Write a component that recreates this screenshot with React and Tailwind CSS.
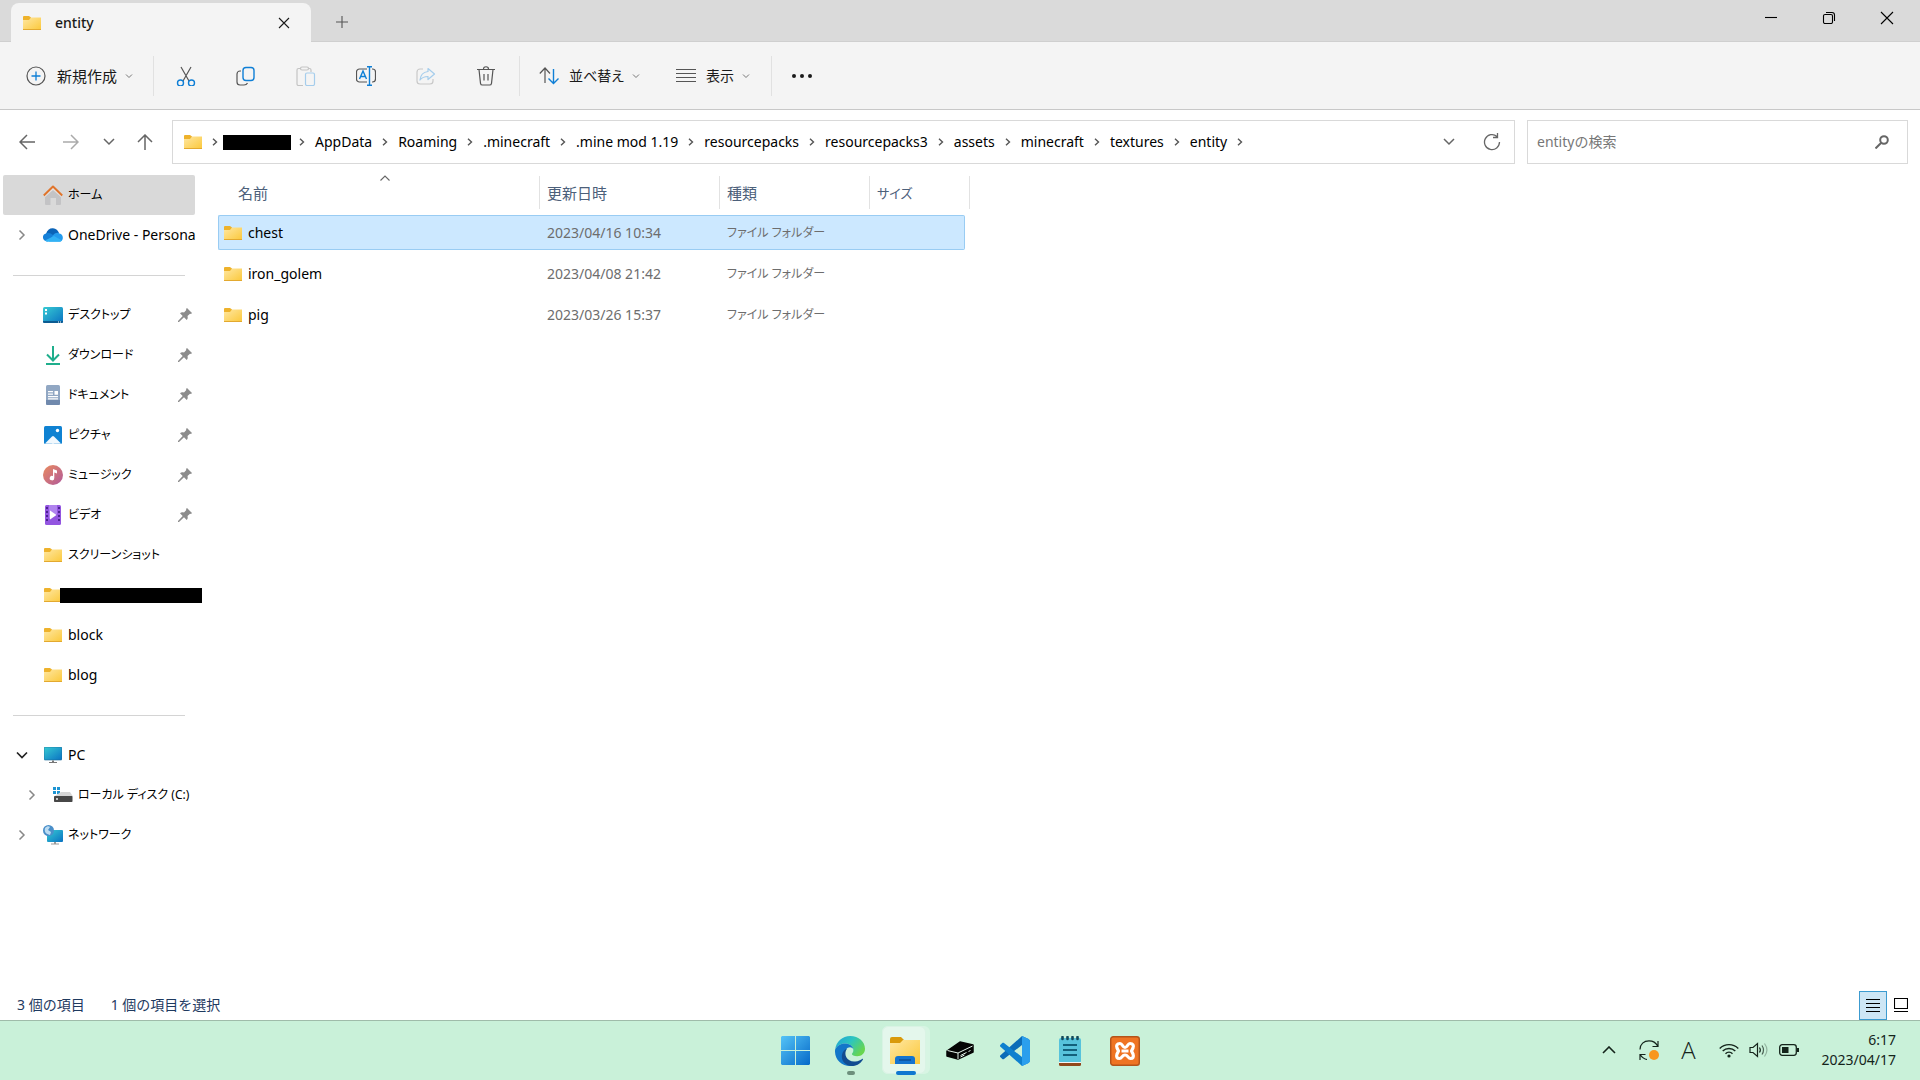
import { Fragment, useState } from 'react';

const crumbs = [
  'AppData',
  'Roaming',
  '.minecraft',
  '.mine mod 1.19',
  'resourcepacks',
  'resourcepacks3',
  'assets',
  'minecraft',
  'textures',
  'entity',
];

const files = [
  { name: 'chest', date: '2023/04/16 10:34', type: 'ファイル フォルダー' },
  { name: 'iron_golem', date: '2023/04/08 21:42', type: 'ファイル フォルダー' },
  { name: 'pig', date: '2023/03/26 15:37', type: 'ファイル フォルダー' },
];

export default function App() {
  const [selected, setSelected] = useState('chest');

  return (
    <div className="flex min-h-screen flex-col bg-white font-['Noto_Sans','Noto_Sans_CJK_JP',sans-serif] text-sm leading-5 text-[#1a1a1a]">
      <TitleBar />
      <Toolbar />
      <AddressRow />

      {/* CONTENT */}
      <div className="flex flex-1">
        <Sidebar />
        <main className="flex-1">
          <FileTable selected={selected} onSelect={setSelected} />
        </main>
      </div>

      <StatusBar />
      <Taskbar />
    </div>
  );
}

/* TITLE BAR */

function TitleBar() {
  return (
    <header className="flex h-[42px] border-b border-[#cfcfcf] bg-[#dadada]">
      <div className="mt-[3px] -mb-px ml-[11px] flex w-[300px] items-center rounded-t-lg bg-[#f4f4f4] pr-[13px] pl-3">
        <FolderIcon />
        <span className="ml-3.5 flex-1 font-medium">entity</span>
        <button aria-label="タブを閉じる" className="flex h-6 w-7 items-center justify-center">
          <Line className="size-3" box="0 0 12 12" d="M1 1l10 10M11 1L1 11" />
        </button>
      </div>
      <button aria-label="新しいタブ" className="mt-[3px] ml-[15px] flex w-8 items-center justify-center text-[#555]">
        <Line className="size-3.5" box="0 0 14 14" d="M7 1v12M1 7h12" />
      </button>
      <div className="mr-1 ml-auto flex h-9">
        <button aria-label="最小化" className="flex w-[58px] items-center justify-center text-black">
          <Line className="size-3" box="0 0 12 12" d="M0 5.5h12" />
        </button>
        <button aria-label="元に戻す" className="flex w-[58px] items-center justify-center text-black">
          <Line className="size-3.5" box="0 0 14 14" d="M3 3.5h6A1.5 1.5 0 0 1 10.500 5v6a1.500 1.500 0 0 1-1.500 1.500H3A1.500 1.500 0 0 1 1.500 11V5A1.500 1.500 0 0 1 3 3.500zM4 1.500h6a2.500 2.500 0 0 1 2.500 2.500v6" />
        </button>
        <button aria-label="閉じる" className="flex w-[58px] items-center justify-center text-black">
          <Line className="size-3.5" box="0 0 14 14" d="M1 1l12 12M13 1L1 13" />
        </button>
      </div>
    </header>
  );
}

/* TOOLBAR */

function Toolbar() {
  return (
    <div className="flex h-[68px] items-center border-b border-[#c8c8c8] bg-[#f4f4f4]">
      <button className="ml-[26px] flex items-center">
        <svg className="size-5" viewBox="0 0 20 20" fill="none">
          <circle cx="10" cy="10" r="9" stroke="#555" strokeWidth="1.2" />
          <path d="M10 5.500v9M5.500 10h9" stroke="#0f7fd6" strokeWidth="1.300" />
        </svg>
        <span className="ml-[11px] text-[15px]">新規作成</span>
        <Caret />
      </button>
      <Divider className="ml-5" />

      <div className="ml-0.5 flex">
        <ToolButton label="切り取り">
          <path d="M5 1l8 14M15 1L7 15" stroke="#555" />
          <circle cx="4.500" cy="17" r="3" stroke="#0f7fd6" strokeWidth="1.400" />
          <circle cx="15.500" cy="17" r="3" stroke="#0f7fd6" strokeWidth="1.400" />
        </ToolButton>
        <ToolButton label="コピー">
          <path d="M5 5H4a3 3 0 0 0-3 3v8a3 3 0 0 0 3 3h4c2 0 3-1 3.500-2" stroke="#555" />
          <rect x="7" y="1.500" width="11" height="13" rx="3" stroke="#0f7fd6" strokeWidth="1.400" />
        </ToolButton>
        <ToolButton label="貼り付け">
          <path d="M5 2.500H2.500A1.500 1.500 0 0 0 1 4v14a1.500 1.500 0 0 0 1.500 1.500H7M12 2.500h1.500A1.500 1.500 0 0 1 15 4v2" stroke="#c3c3c3" />
          <rect x="4.500" y="1" width="8" height="3" rx="1.500" stroke="#c3c3c3" />
          <rect x="9.500" y="7" width="9" height="12.500" rx="1.500" stroke="#a5cdec" />
        </ToolButton>
        <ToolButton label="名前の変更">
          <path d="M11 3H3.500A3 3 0 0 0 .5 6v7a3 3 0 0 0 3 3H11M16 3h.5a3 3 0 0 1 3 3v7a3 3 0 0 1-3 3H16" stroke="#555" />
          <path d="M3.500 13L7 5l3.500 8M4.800 10.500h4.500M13.500 1v18M11 .7h5M11 19.300h5" stroke="#0f7fd6" strokeWidth="1.400" />
        </ToolButton>
        <ToolButton label="共有">
          <path d="M7 3H4a3 3 0 0 0-3 3v9a3 3 0 0 0 3 3h10a3 3 0 0 0 3-3v-2" stroke="#c8c8c8" />
          <path d="M12 2.500l6.500 5.500L12 13.500v-3c-4 0-6 1-8 3.500.5-5 3.500-8 8-8.500z" stroke="#a5cdec" strokeLinejoin="round" />
        </ToolButton>
        <ToolButton label="削除">
          <path d="M1 3.500h18M7.500 3c0-3 5-3 5 0M3 3.500l1.500 13.800A2 2 0 0 0 6.500 19h7a2 2 0 0 0 2-1.700L17 3.500M8 8v6.500M12 8v6.500" stroke="#555" />
        </ToolButton>
      </div>
      <Divider className="ml-[3px]" />

      <button className="ml-[19px] flex items-center">
        <svg className="size-5" viewBox="0 0 20 20" fill="none" strokeWidth="1.200">
          <path d="M6 17V2M.8 7.500L6 2l5 5.500" stroke="#555" />
          <path d="M14.500 3v14.500M9.500 12.500l5 5 5-5" stroke="#0f7fd6" strokeWidth="1.400" />
        </svg>
        <span className="ml-2.5 text-sm [font-feature-settings:'palt']">並べ替え</span>
        <Caret />
      </button>
      <button className="ml-9 flex items-center">
        <Line className="size-5 text-[#555]" box="0 0 20 20" d="M0 3.500h20M0 7.500h20M0 11.500h20M0 15.500h20" />
        <span className="ml-2.5 text-sm">表示</span>
        <Caret />
      </button>
      <Divider className="ml-[21px]" />
      <button aria-label="もっと見る" className="ml-[19px] flex items-center text-[#1a1a1a]">
        <svg className="h-5 w-[22px]" viewBox="0 0 22 20" fill="currentColor">
          <circle cx="3" cy="10" r="2" />
          <circle cx="11" cy="10" r="2" />
          <circle cx="19" cy="10" r="2" />
        </svg>
      </button>
    </div>
  );
}

/* ADDRESS BAR + SEARCH */

function AddressRow() {
  return (
    <div className="flex gap-3 pt-2.5 pr-3">
      <nav className="flex flex-1">
        <div className="flex w-[172px] items-center pl-[17px] text-[#666]">
          <button aria-label="戻る" className="flex w-5 justify-center">
            <Line className="size-4" box="0 0 16 16" d="M16 8H1M8 1L1 8l7 7" width="1.5" />
          </button>
          <button aria-label="進む" className="ml-6 flex w-5 justify-center text-[#aaa]">
            <Line className="size-4" box="0 0 16 16" d="M0 8h15M8 1l7 7-7 7" width="1.5" />
          </button>
          <button aria-label="最近表示した場所" className="ml-[18px] flex w-5 justify-center">
            <Line className="h-2 w-3" box="0 0 12 8" d="M1 1l5 5 5-5" width="1.5" />
          </button>
          <button aria-label="上へ" className="ml-4 flex w-5 justify-center">
            <Line className="size-4" box="0 0 16 16" d="M8 16V1M1 8l7-7 7 7" width="1.5" />
          </button>
        </div>
        <div className="flex h-11 flex-1 items-center border border-[#d9d9d9] pl-[11px]">
          <FolderIcon />
          <Chevron className="ml-2.5" />
          <span className="mr-1.5 ml-[5px] h-[15px] w-[68px] bg-black" />
          <Chevron className="ml-0.5" />
          {crumbs.map((crumb) => (
            <Fragment key={crumb}>
              <button className="ml-2.5 text-black">{crumb}</button>
              <Chevron className="ml-2.5" />
            </Fragment>
          ))}
          <button aria-label="以前の場所" className="ml-auto flex w-6 justify-center text-[#666]">
            <Line className="h-2 w-3" box="0 0 12 8" d="M1 1l5 5 5-5" width="1.5" />
          </button>
          <button aria-label="最新の情報に更新" className="mr-2.5 ml-[19px] flex w-6 justify-center text-[#666]">
            <Line className="size-[18px]" box="0 0 18 18" d="M16.500 9A7.500 7.500 0 1 1 14 3.500M14.500 0v4.500H10" width="1.300" />
          </button>
        </div>
      </nav>
      <label className="flex h-11 w-[381px] items-center border border-[#d9d9d9] pr-[18px] pl-[9px]">
        <input
          type="text"
          aria-label="検索"
          placeholder="entityの検索"
          className="min-w-0 flex-1 outline-none placeholder:text-[#777]"
        />
        <svg className="size-3.5 text-[#666]" viewBox="0 0 14 14" fill="none" stroke="currentColor" strokeWidth="2">
          <circle cx="9" cy="5" r="3.800" />
          <path d="M6 8l-5.500 5.500" />
        </svg>
      </label>
    </div>
  );
}

/* SIDEBAR */

function Sidebar() {
  return (
    <aside className="w-[218px] shrink-0 pt-[11px] pl-[3px]">
      <NavItem label="ホーム" icon={<HomeIcon />} kana active />
      <NavItem label="OneDrive - Persona" icon={<CloudIcon />} expand="closed" />
      <NavDivider />
      <NavItem label="デスクトップ" icon={<DesktopIcon />} kana pinned />
      <NavItem label="ダウンロード" icon={<DownloadIcon />} kana pinned />
      <NavItem label="ドキュメント" icon={<DocumentIcon />} kana pinned />
      <NavItem label="ピクチャ" icon={<PictureIcon />} kana pinned />
      <NavItem label="ミュージック" icon={<MusicIcon />} kana pinned />
      <NavItem label="ビデオ" icon={<VideoIcon />} kana pinned />
      <NavItem label="スクリーンショット" icon={<FolderIcon />} kana />
      <div className="flex h-10 items-center pl-[41px]">
        <FolderIcon />
        <span className="-ml-0.5 h-[15px] w-[142px] bg-black" />
      </div>
      <NavItem label="block" icon={<FolderIcon />} />
      <NavItem label="blog" icon={<FolderIcon />} />
      <NavDivider />
      <NavItem label="PC" icon={<MonitorIcon />} expand="open" />
      <NavItem label="ローカル ディスク (C:)" icon={<DriveIcon />} expand="closed" kana nested />
      <NavItem label="ネットワーク" icon={<NetworkIcon />} expand="closed" kana />
    </aside>
  );
}

const NavItem = ({ label, icon, active, pinned, expand, nested, kana }) => (
  <button
    className={`flex h-10 w-48 items-center rounded-xs text-left whitespace-nowrap text-black ${
      active ? 'bg-[#d9d9d9]' : ''
    } ${nested ? 'pl-[22px]' : 'pl-3'}`}
  >
    <span className="flex w-3.5 shrink-0 justify-center">
      {expand === 'closed' && <Line className="h-3 w-2 text-[#888]" box="0 0 8 12" d="M1.500 1.500L6 6l-4.500 4.500" width="1.500" />}
      {expand === 'open' && <Line className="h-2 w-3 text-[#222]" box="0 0 12 8" d="M1 1.500l5 5 5-5" width="1.700" />}
    </span>
    <span className="ml-3.5 flex w-5 shrink-0 justify-center">{icon}</span>
    <span className={`ml-[5px] flex-1 ${kana ? "text-xs [font-feature-settings:'palt']" : ''}`}>{label}</span>
    {pinned && <PinIcon />}
  </button>
);

const NavDivider = () => (
  <div className="flex h-10 w-48 items-center pr-2.5 pl-2.5">
    <hr className="w-full border-[#d4d4d4]" />
  </div>
);

/* FILE LIST */

function FileTable({ selected, onSelect }) {
  return (
    <table className="mt-1.5 w-[752px] table-fixed border-separate border-spacing-x-0 border-spacing-y-1.5 text-left">
      <colgroup>
        <col className="w-[322px]" />
        <col className="w-[180px]" />
        <col className="w-[150px]" />
        <col className="w-[95px]" />
        <col className="w-[5px]" />
      </colgroup>
      <thead>
        <tr className="h-[33px] text-[#4c607a]">
          <HeadCell className="relative pl-5">
            名前
            <Line className="absolute -top-0.5 left-[161px] h-2 w-3 text-[#666]" box="0 0 12 8" d="M1.500 6.500L6 2l4.500 4.500" />
          </HeadCell>
          <HeadCell className="pl-[7px]">更新日時</HeadCell>
          <HeadCell className="pl-[7px]">種類</HeadCell>
          <th className="p-0 pl-[7px] text-[13px] font-normal [font-feature-settings:'palt']">サイズ</th>
          <td className="border-r border-[#e2e2e2] p-0" />
        </tr>
      </thead>
      <tbody>
        {files.map((file) => {
          const on = file.name === selected;
          const cell = on ? 'border-y border-[#99ccf3] bg-[#cce8ff]' : 'border-y border-transparent';
          return (
            <tr key={file.name} className="h-[35px] text-[#6d6d6d]" onClick={() => onSelect(file.name)}>
              <td className={`rounded-l-xs border-l p-0 pl-[5px] ${cell}`}>
                <div className="flex items-center text-black">
                  <FolderIcon />
                  <span className="ml-1.5">{file.name}</span>
                </div>
              </td>
              <td className={`p-0 pl-[7px] ${cell}`}>{file.date}</td>
              <td className={`p-0 pl-[7px] text-xs [font-feature-settings:'palt'] ${cell}`}>{file.type}</td>
              <td className={`rounded-r-xs border-r p-0 ${cell}`} />
              <td className="p-0" />
            </tr>
          );
        })}
      </tbody>
    </table>
  );
}

const HeadCell = ({ className, children }) => (
  <th className={`border-r border-[#e2e2e2] p-0 text-[15px] font-normal ${className}`}>{children}</th>
);

/* STATUS BAR */

function StatusBar() {
  return (
    <footer className="flex h-[30px] items-center pl-[17px] text-[#1e3a5f]">
      <span>3 個の項目</span>
      <span className="ml-[26px]">1 個の項目を選択</span>
      <button aria-label="詳細" className="ml-auto flex h-[29px] w-7 items-center justify-center border border-[#3c9bd0] bg-[#cde6f5] text-black">
        <Line className="size-3.5" box="0 0 14 14" d="M0 1.500h14M0 5.500h14M0 9.500h14M0 13.500h14" />
      </button>
      <button aria-label="大アイコン" className="mr-3 ml-[7px] text-black">
        <Line className="size-3.5" box="0 0 14 14" d="M.5.5h13v10H.5zM0 13.500h14" />
      </button>
    </footer>
  );
}

/* TASKBAR */

function Taskbar() {
  return (
    <div className="grid h-[60px] grid-cols-[1fr_auto_1fr] border-t border-[#9fbcaa] bg-[#c9f1d9]">
      <div />
      <div className="flex">
        <TaskButton label="スタート"><WindowsLogo /></TaskButton>
        <TaskButton label="Microsoft Edge" state="running"><EdgeLogo /></TaskButton>
        <TaskButton label="エクスプローラー" state="active"><ExplorerLogo /></TaskButton>
        <TaskButton label="ドライブ"><BoxLogo /></TaskButton>
        <TaskButton label="Visual Studio Code"><CodeLogo /></TaskButton>
        <TaskButton label="メモ帳"><NotepadLogo /></TaskButton>
        <TaskButton label="XAMPP"><XamppLogo /></TaskButton>
      </div>

      <div className="flex items-center justify-end pr-6 pb-0.5 text-[#14241b]">
        <button aria-label="隠れているインジケーター">
          <Line className="h-2 w-3.5" box="0 0 14 8" d="M1 7l6-6 6 6" width="1.600" />
        </button>
        <svg className="ml-[23px] size-5" viewBox="0 0 20 20" fill="none" stroke="currentColor" strokeWidth="1.200">
          <path d="M1 9.500C1 4 5 .8 10 .8c4 0 7 2 8.500 5M19 1v5.500h-5.500M1 20v-5.500h5.500M1.500 15C3 17.500 5 19 8 19.500" />
          <circle cx="15" cy="15" r="5" fill="#f8971d" stroke="none" />
        </svg>
        <span className="ml-[22px] w-4 text-center font-['Open_Sans',sans-serif] text-2xl leading-6 font-light">A</span>
        <svg className="ml-[22px] h-4 w-5" viewBox="0 0 20 16" fill="none" stroke="currentColor" strokeWidth="1.400">
          <path d="M.7 6.500a13.200 13.200 0 0 1 18.600 0M3.700 9a9 9 0 0 1 12.600 0M6.500 11.700a5 5 0 0 1 7 0" />
          <circle cx="10" cy="14" r="1.600" fill="currentColor" stroke="none" />
        </svg>
        <svg className="ml-2.5 h-[18px] w-5" viewBox="0 0 20 18" fill="none" stroke="currentColor" strokeWidth="1.200">
          <path d="M1 6.500h3l4.500-4v13l-4.500-4H1zM10.500 6.500c1 1.500 1 3.500 0 5" />
          <path d="M13 4.500c2 3 2 6 0 9" strokeOpacity=".7" />
          <path d="M15.500 2.500c3 4 3 9 0 13" strokeOpacity=".3" />
        </svg>
        <svg className="ml-2.5 h-3 w-5" viewBox="0 0 20 12" fill="none" stroke="currentColor" strokeWidth="1.300">
          <rect x=".7" y=".7" width="16.600" height="10.600" rx="2.500" />
          <rect x="3" y="3" width="6.500" height="6" fill="currentColor" stroke="none" />
          <path d="M19 4v4" strokeWidth="2" />
        </svg>
        <div className="ml-[23px] text-right">
          <div>6:17</div>
          <div>2023/04/17</div>
        </div>
      </div>
    </div>
  );
}

const TaskButton = ({ label, state, children }) => (
  <button aria-label={label} className="relative flex w-[55px] items-center justify-center">
    {state === 'active' && (
      <>
        <span className="absolute top-[5px] left-1 h-12 w-12 rounded-md bg-[#d7f5e3]" />
        <span className="absolute top-[5px] left-1 h-12 w-11 rounded-md border border-[#d9f3e4] bg-[#e4f7ec]" />
        <span className="absolute bottom-[5px] left-[18px] h-1 w-5 rounded-full bg-[#0f78d0]" />
      </>
    )}
    {state === 'running' && <span className="absolute bottom-[5px] left-6 h-1 w-2 rounded-full bg-[#6d8f7c]" />}
    <span className="relative">{children}</span>
  </button>
);

/* SMALL PARTS */

const Line = ({ className, box, d, width = '1.1' }) => (
  <svg className={className} viewBox={box} fill="none" stroke="currentColor" strokeWidth={width}>
    <path d={d} />
  </svg>
);

const Caret = () => <Line className="ml-2 h-1.5 w-2 text-[#777]" box="0 0 8 6" d="M1 1.500l3 3 3-3" width="1" />;

const Chevron = ({ className }) => (
  <Line className={`h-2 w-1.5 shrink-0 text-[#555] ${className}`} box="0 0 6 8" d="M1 .7L4.500 4 1 7.300" width="1.400" />
);

const Divider = ({ className }) => <span className={`h-10 w-px bg-[#e1e1e1] ${className}`} />;

const ToolButton = ({ label, children }) => (
  <button aria-label={label} className="flex w-[60px] justify-center">
    <svg className="size-5" viewBox="0 0 20 20" fill="none" strokeWidth="1.200">
      {children}
    </svg>
  </button>
);

/* ICONS */

const FolderIcon = () => (
  <svg className="h-3.5 w-[18px] shrink-0" viewBox="0 0 18 14">
    <defs>
      <linearGradient id="folder" x1="0" y1="0" x2="1" y2="1">
        <stop offset="0" stopColor="#ffe7a2" />
        <stop offset="1" stopColor="#fbc83a" />
      </linearGradient>
    </defs>
    <path d="M0 1a1 1 0 0 1 1-1h5l2 1.500V5H0z" fill="#eeb22b" />
    <path d="M0 4h6l2-2.500h10V14H0z" fill="url(#folder)" />
    <path d="M0 13h18v1H0z" fill="#e3a92f" />
  </svg>
);

const HomeIcon = () => (
  <svg className="size-5" viewBox="0 0 20 20" fill="none">
    <path d="M2 9l8-7 8 7v10a1 1 0 0 1-1 1h-4v-7H7.500v7H3a1 1 0 0 1-1-1z" fill="#c3c3c5" />
    <path d="M2 9l8-7 8 7v3L10 5l-8 7z" fill="#e4e2e2" />
    <path d="M.8 10.500L10 1.500l9.200 9" stroke="#e0752c" strokeWidth="2" strokeLinejoin="round" />
  </svg>
);

const CloudIcon = () => (
  <svg className="h-3.5 w-5" viewBox="0 0 20 14">
    <path d="M3 6C4 2 7 0 10 .3 13 .6 15 2.500 16 5l-5 5z" fill="#0b64b8" />
    <path d="M3 5.500c3-1 5 0 7 1.500l4.500 3L4 13.500C-1 13-1.500 6.500 3 5.500z" fill="#1580d8" />
    <path d="M9.500 8c2-3 5-4 7-2.500 4 .5 4.500 6.500 1 8H6z" fill="#249bed" />
    <path d="M2 12.500l9-4.500 8 4.500c-1 1-2 1.200-3 1.200H5c-1 0-2-.2-3-1.200z" fill="#32b2f5" />
  </svg>
);

const DesktopIcon = () => (
  <svg className="h-4 w-5" viewBox="0 0 20 16">
    <defs>
      <linearGradient id="screen" x1="0" y1="0" x2="1" y2="1">
        <stop offset="0" stopColor="#37cbd3" />
        <stop offset="1" stopColor="#0a72c2" />
      </linearGradient>
    </defs>
    <rect width="20" height="16" rx="1.500" fill="url(#screen)" />
    <path d="M0 14h20v.5a1.500 1.500 0 0 1-1.500 1.500h-17A1.500 1.500 0 0 1 0 14.500z" fill="#0c5b91" />
    <path d="M2 2h2v2H2zM2 5.500h2v2H2zM15 14.500h1v1h-1zM17 14.500h1v1h-1z" fill="#fff" />
  </svg>
);

const DownloadIcon = () => (
  <svg className="size-5" viewBox="0 0 20 20" fill="none" stroke="#1fae8c" strokeWidth="2">
    <path d="M10 1v14M4 9.500l6 6 6-6M3 19h14" />
  </svg>
);

const DocumentIcon = () => (
  <svg className="h-5 w-3.5" viewBox="0 0 14 20">
    <rect width="14" height="20" rx="1.500" fill="#91a7c3" />
    <path d="M0 15h14v3.500a1.500 1.500 0 0 1-1.500 1.500h-11A1.500 1.500 0 0 1 0 18.500z" fill="#7089ad" />
    <path d="M2 6h5v1.300H2zM2 8.500h5v1.300H2zM2 11h10v1.300H2zM2 13.300h10v1.300H2zM8.500 6H12v3.800H8.500z" fill="#fff" />
  </svg>
);

const PictureIcon = () => (
  <svg className="size-[18px]" viewBox="0 0 18 18">
    <rect width="18" height="18" rx="1.500" fill="#0f82d2" />
    <path d="M1 17.500l7-7a1.500 1.500 0 0 1 2 0l7 7c-.5.500-15.500.500-16 0z" fill="#f1f8fd" />
    <circle cx="13.500" cy="4.500" r="1.700" fill="#fff" />
  </svg>
);

const MusicIcon = () => (
  <svg className="size-5" viewBox="0 0 20 20">
    <defs>
      <linearGradient id="music" x1="0" y1="0" x2="1" y2="1">
        <stop offset="0" stopColor="#ea8b5e" />
        <stop offset="1" stopColor="#b0599b" />
      </linearGradient>
    </defs>
    <circle cx="10" cy="10" r="10" fill="url(#music)" />
    <path d="M10 4l4 1.500v3L11.300 7.500V13a2.300 2.300 0 1 1-1.300-2z" fill="#fff" />
  </svg>
);

const VideoIcon = () => (
  <svg className="h-5 w-4" viewBox="0 0 16 20">
    <rect width="16" height="20" rx="1.500" fill="#9355e0" />
    <path d="M4 0h8v9L4 14z" fill="#b083ee" />
    <path d="M1 2h2v2H1zM1 6h2v2H1zM1 10h2v2H1zM1 14h2v2H1zM13 2h2v2h-2zM13 6h2v2h-2zM13 10h2v2h-2zM13 14h2v2h-2z" fill="#4c2391" />
    <path d="M5 5.500l6.500 4.500L5 14.500z" fill="#fff" />
  </svg>
);

const MonitorIcon = () => (
  <svg className="h-4 w-[18px]" viewBox="0 0 18 16">
    <rect width="18" height="13" rx="1" fill="url(#screen)" stroke="#186a99" strokeWidth=".6" />
    <path d="M8 13.500h2V15h3v1H5v-1h3z" fill="#777" />
  </svg>
);

const DriveIcon = () => (
  <svg className="h-4 w-5" viewBox="0 0 20 16">
    <path d="M0 0h3v3H0zM4 0h3v3H4zM0 4h3v3H0zM4 4h3v3H4z" fill="#1d94d2" />
    <path d="M8 5h9l3 4.500H1z" fill="#d6d6d6" />
    <rect x="1" y="9" width="18.500" height="6" rx=".8" fill="#474747" />
    <circle cx="4" cy="12" r=".9" fill="#fff" />
  </svg>
);

const NetworkIcon = () => (
  <svg className="size-5" viewBox="0 0 20 20">
    <rect x="4" y="5" width="16" height="12" rx="1" fill="url(#screen)" />
    <path d="M11 17h2v1.500h3v1H8v-1h3z" fill="#999" />
    <circle cx="5.500" cy="5.500" r="5.500" fill="#4a8fc9" />
    <path d="M2 3c2-2 4-2 5-1L5 5l3 2-1 3C3 9 1 7 2 3z" fill="#bcdcf2" />
  </svg>
);

const PinIcon = () => (
  <svg className="mr-[3px] size-3.5 shrink-0" viewBox="0 0 14 14" fill="#8c8c8c">
    <path d="M9 0l5 5-1 1-1-.3L9.500 8c.5 2 .2 3-.8 4L6 9.300 1 14H0v-1l4.700-5L2 5.300c1-1 2-1.300 4-.8L8.300 2 8 1z" />
  </svg>
);

const WindowsLogo = () => (
  <svg className="size-[29px]" viewBox="0 0 29 29">
    <defs>
      <linearGradient id="win" x1="0" y1="0" x2="1" y2="1">
        <stop offset="0" stopColor="#55c4f7" />
        <stop offset="1" stopColor="#0569c8" />
      </linearGradient>
    </defs>
    <path d="M1 0h13v14H0V1zM15 0h13l1 1v13H15zM0 15h14v14H1l-1-1zM15 15h14v13l-1 1H15z" fill="url(#win)" />
  </svg>
);

const EdgeLogo = () => (
  <svg className="size-[30px]" viewBox="0 0 24 24">
    <defs>
      <linearGradient id="edgeTop" x1="0" y1="0" x2="1" y2=".6">
        <stop offset="0" stopColor="#1f9fd8" />
        <stop offset=".5" stopColor="#2cc5c0" />
        <stop offset="1" stopColor="#68d64e" />
      </linearGradient>
    </defs>
    <path d="M.1 10.800C.9 4.500 6 0 12.200 0 19 0 24 4.700 24 10.200c0 3.800-3 6-6.200 6-2.700 0-4.300-.9-4.300-1.800 0-.6 1.200-1 1.200-3.200C14.700 8 11.500 6 8 6 4.200 6 1.500 8 .1 10.800z" fill="url(#edgeTop)" />
    <path d="M.1 10.800C1.500 8 4.200 6 8 6c3.500 0 6.700 2 6.700 5.200 0-1.600-1.500-2.300-2.700-2.300-2.500 0-4.500 2.600-4.500 5.800C7.500 19.500 11 23 15 23.600 7 25.500-1 19.500.1 10.800z" fill="#1377c9" />
    <path d="M9.600 10c-3.500 5 .5 11 6.600 10.300 2.500-.2 4.400-1.200 5.500-2 .5-.3.900.2.600.6C20 22.500 16.500 24 13.500 24 8 23.500 5 19.500 5.500 15.500 6 12.500 7.500 10.800 9.600 10z" fill="#124d91" />
  </svg>
);

const ExplorerLogo = () => (
  <svg className="h-[27px] w-[30px]" viewBox="0 0 30 27">
    <path d="M0 2a2 2 0 0 1 2-2h9l3 3v5H0z" fill="#d99a0b" />
    <path d="M0 6h10l3-3h17v24H0z" fill="url(#folder)" />
    <path d="M5 27v-5a3 3 0 0 1 3-3h14a3 3 0 0 1 3 3v5z" fill="#1474cf" />
    <path d="M9 23h12" stroke="#0b4f98" strokeWidth="1.500" />
  </svg>
);

const BoxLogo = () => (
  <svg className="h-[19px] w-7" viewBox="0 0 28 19" strokeLinejoin="round">
    <path d="M1 10L14 1l13 3v7L12 18 1 15z" fill="#050505" stroke="#050505" strokeWidth="1.500" />
    <path d="M1.500 9.500L12 12l14.500-7M12 12v6M14.500 14.500l6-3M14.500 16l4-2M22.500 10.500l2-1" fill="none" stroke="#e6f4ec" />
  </svg>
);

const CodeLogo = () => (
  <svg className="size-[30px]" viewBox="0 0 30 30">
    <path d="M22 0l6 2.800c1.200.6 2 1.500 2 3V8l-8 1L4 23c-.5.400-1.200.400-1.700 0l-1.800-1.700c-.7-.6-.7-1.500 0-2z" fill="#0b6cb8" />
    <path d="M22 30l6-2.800c1.200-.6 2-1.500 2-3V22l-8-1L4 7c-.5-.4-1.200-.4-1.700 0L.5 8.700c-.7.600-.7 1.500 0 2z" fill="#0e80cf" />
    <path d="M22 0l6 2.800c1.200.6 2 1.500 2 3v18.400c0 1.500-.8 2.400-2 3L22 30z" fill="#2b9fed" />
  </svg>
);

const NotepadLogo = () => (
  <svg className="h-[30px] w-[22px]" viewBox="0 0 22 30">
    <rect y="2" width="22" height="25" rx="2" fill="#57c3dc" />
    <path d="M0 26h22v1H0z" fill="#f4f4f4" />
    <path d="M0 27h22v1.500a1.500 1.500 0 0 1-1.500 1.500h-19A1.500 1.500 0 0 1 0 28.500z" fill="#91481c" />
    <path d="M4 9h14M4 14h14M4 19h14" stroke="#13617c" strokeWidth="1.800" />
    <path d="M3.500 1v2M8.500 1v2M13.500 1v2M18.500 1v2" stroke="#124a5c" strokeWidth="2.600" strokeLinecap="round" />
  </svg>
);

const XamppLogo = () => (
  <svg className="size-[30px]" viewBox="0 0 30 30" fill="none">
    <rect x=".7" y=".7" width="28.600" height="28.600" rx="2.500" fill="#ef7423" stroke="#b5541a" strokeWidth="1.400" />
    <path
      d="M10 7.500c-3 0-4 2-3 4.500l1.500 3L7 18c-1 3 0 4.500 2.500 4.500 2.500 0 2.500-3.500 5.500-3.500s3 3.500 5.500 3.500S24 21 23 18l-1.500-3L23 12c1-2.500 0-4.500-3-4.500-2.500 0-2.500 4-5 4s-2.500-4-5-4z"
      stroke="#fff"
      strokeWidth="3.200"
      strokeLinejoin="round"
    />
    <path d="M11.500 15h7" stroke="#fff" strokeWidth="3" />
  </svg>
);
